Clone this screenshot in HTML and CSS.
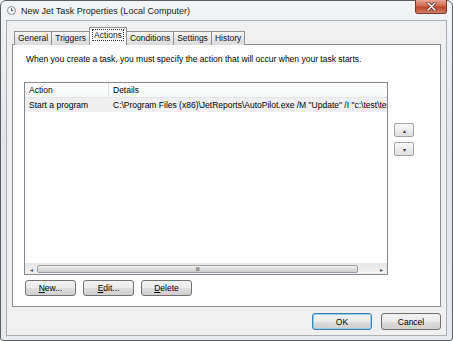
FILE: index.html
```html
<!DOCTYPE html>
<html lang="en">
<head>
    <meta charset="UTF-8">
    <title>New Jet Task Properties (Local Computer)</title>
    <link rel="stylesheet" href="styles.css">
</head>
<body>
    <div class="window">
        <div class="titlebar">
            <svg class="clock" width="9" height="9" viewBox="0 0 9 9">
                <circle cx="4.5" cy="4.5" r="4" fill="#f7f7f7" stroke="#7d8792" stroke-width="1"/>
                <path d="M4.5 2.2 V4.6 H6.4" fill="none" stroke="#3a3f45" stroke-width="0.9"/>
            </svg>
            <span class="title">New Jet Task Properties (Local Computer)</span>
            <button class="close">
                <svg width="11" height="9" viewBox="0 0 11 9">
                    <path d="M2 1 L9 8 M9 1 L2 8" stroke="#5a2318" stroke-width="3" stroke-linecap="round"/>
                    <path d="M2 1 L9 8 M9 1 L2 8" stroke="#ffffff" stroke-width="1.6" stroke-linecap="round"/>
                </svg>
            </button>
        </div>

        <div class="client">
            <div class="tabs">
                <div class="tab">General</div>
                <div class="tab">Triggers</div>
                <div class="tab active"><span class="focus">Actions</span></div>
                <div class="tab">Conditions</div>
                <div class="tab">Settings</div>
                <div class="tab">History</div>
            </div>

            <div class="panel">
                <p class="intro">When you create a task, you must specify the action that will occur when your task starts.</p>

                <div class="panel-body">
                    <div class="listview">
                        <div class="lv-head">
                            <div class="col-action">Action</div>
                            <div class="col-details">Details</div>
                        </div>
                        <div class="lv-row">
                            <div class="col-action">Start a program</div>
                            <div class="col-details">C:\Program Files (x86)\JetReports\AutoPilot.exe /M "Update" /I "c:\test\test.xlsx"</div>
                        </div>
                        <div class="lv-space"></div>
                        <div class="hscroll">
                            <span class="arrow">&#9666;</span>
                            <div class="thumb"><span class="grip">III</span></div>
                            <div class="track"></div>
                            <span class="arrow">&#9656;</span>
                        </div>
                    </div>

                    <div class="order">
                        <button class="small-btn">&#9652;</button>
                        <button class="small-btn">&#9662;</button>
                    </div>
                </div>

                <div class="action-buttons">
                    <button class="btn"><u>N</u>ew...</button>
                    <button class="btn"><u>E</u>dit...</button>
                    <button class="btn"><u>D</u>elete</button>
                </div>
            </div>

            <div class="footer">
                <button class="btn wide default">OK</button>
                <button class="btn wide">Cancel</button>
            </div>
        </div>
    </div>
</body>
</html>
```

FILE: styles.css
```css
body {
    margin: 0;
    background-color: #fff;
    font-family: "Liberation Sans", Arial, sans-serif;
    font-size: 8.5px;
    color: #000;
}

button {
    font-family: inherit;
    font-size: inherit;
    color: inherit;
    padding: 0;
}

.window {
    position: relative;
    width: 453px;
    height: 341px;
    box-sizing: border-box;
    border: 1px solid #5b5f63;
    border-radius: 6px 6px 3px 3px;
    background: linear-gradient(#f3f5f7, #e2e6ea 40%, #e7eaed);
    padding: 0 5px 4px;
    display: flex;
    flex-direction: column;
}

/* Title bar */
.titlebar {
    height: 19px;
    display: flex;
    align-items: center;
    gap: 5px;
}

.clock {
    margin-left: 1px;
}

.title {
    font-size: 9px;
    color: #1a1a1a;
}

.close {
    position: absolute;
    top: -1px;
    right: 5px;
    width: 32px;
    height: 14px;
    border: 1px solid #7a3a2e;
    border-top: none;
    border-radius: 0 0 3px 3px;
    background: linear-gradient(#e8a593, #d06a52 45%, #c0432b 55%, #d2806a);
    display: flex;
    align-items: center;
    justify-content: center;
}

/* Client area */
.client {
    flex: 1;
    border: 1px solid #a9b0b8;
    background-color: #f0f0f0;
    padding: 6px 5px 0;
    display: flex;
    flex-direction: column;
}

.tabs {
    display: flex;
    align-items: flex-end;
    padding-left: 2px;
    margin-bottom: -1px;
    position: relative;
    z-index: 1;
}

.tab {
    height: 13px;
    line-height: 13px;
    padding: 0 3px;
    border: 1px solid #8e9196;
    border-bottom: none;
    border-left: none;
    background: linear-gradient(#f7f7f7, #e6e6e6 50%, #dcdcdc);
    color: #111;
}

.tab:first-child {
    border-left: 1px solid #8e9196;
}

.tab.active {
    height: 17px;
    line-height: 15px;
    padding: 0 2px;
    background: #fff;
    border-left: 1px solid #8e9196;
    margin-left: -1px;
}

.tab.active + .tab {
    border-left: none;
}

.focus {
    border: 1px dotted #333;
    padding: 0 1px;
}

/* Tab page */
.panel {
    flex: 1;
    border: 1px solid #898c95;
    background-color: #fff;
    padding: 0 11px 10px;
    display: flex;
    flex-direction: column;
}

.intro {
    margin: 9px 0 0 2px;
    height: 11px;
    line-height: 11px;
}

.panel-body {
    flex: 1;
    display: flex;
    margin-top: 17px;
}

.listview {
    width: 362px;
    border: 1px solid #828790;
    display: flex;
    flex-direction: column;
}

.lv-head, .lv-row {
    display: flex;
    white-space: nowrap;
    overflow: hidden;
}

.lv-head {
    height: 14px;
    line-height: 14px;
    background: linear-gradient(#ffffff, #f7f8f9);
    border-bottom: 1px solid #e3e5e8;
}

.lv-row {
    height: 14px;
    line-height: 14px;
    background-color: #efefef;
}

.col-action {
    width: 79px;
    padding-left: 4px;
    flex-shrink: 0;
}

.lv-head .col-action {
    border-right: 1px solid #e2e3e5;
}

.col-details {
    padding-left: 4px;
}

.lv-row .col-details {
    padding-left: 5px;
}

.lv-space {
    flex: 1;
}

.hscroll {
    height: 10px;
    display: flex;
    align-items: center;
    background: linear-gradient(#e8e8e8, #f2f2f2);
    border-top: 1px solid #e6e6e6;
}

.hscroll .arrow {
    width: 12px;
    text-align: center;
    font-size: 6px;
    color: #555;
}

.thumb {
    width: 321px;
    height: 8px;
    box-sizing: border-box;
    border: 1px solid #9aa0a6;
    border-radius: 2px;
    background: linear-gradient(#f4f4f4, #dcdcdc 50%, #cfcfcf);
    display: flex;
    align-items: center;
    justify-content: center;
}

.grip {
    font-size: 6px;
    letter-spacing: -0.5px;
    color: #555;
}

.track {
    flex: 1;
}

.order {
    display: flex;
    flex-direction: column;
    gap: 5px;
    padding: 41px 0 0 6px;
}

.small-btn {
    width: 20px;
    height: 14px;
    border: 1px solid #a2a2a2;
    border-radius: 2px;
    background: linear-gradient(#fafafa, #ececec 50%, #e0e0e0);
    font-size: 6px;
    color: #333;
}

/* Push buttons */
.btn {
    width: 51px;
    height: 16px;
    border: 1px solid #707070;
    border-radius: 3px;
    background: linear-gradient(#f2f2f2, #ebebeb 50%, #dddddd 51%, #cfcfcf);
}

.action-buttons {
    display: flex;
    gap: 7px;
    margin: 5px 0 0 1px;
}

.footer {
    display: flex;
    justify-content: flex-end;
    gap: 9px;
    padding: 6px 0 5px;
}

.btn.wide {
    width: 60px;
    height: 17px;
}

.btn.default {
    border-color: #3c7fb1;
    box-shadow: inset 0 0 0 1px #8ed1f5;
}
```
